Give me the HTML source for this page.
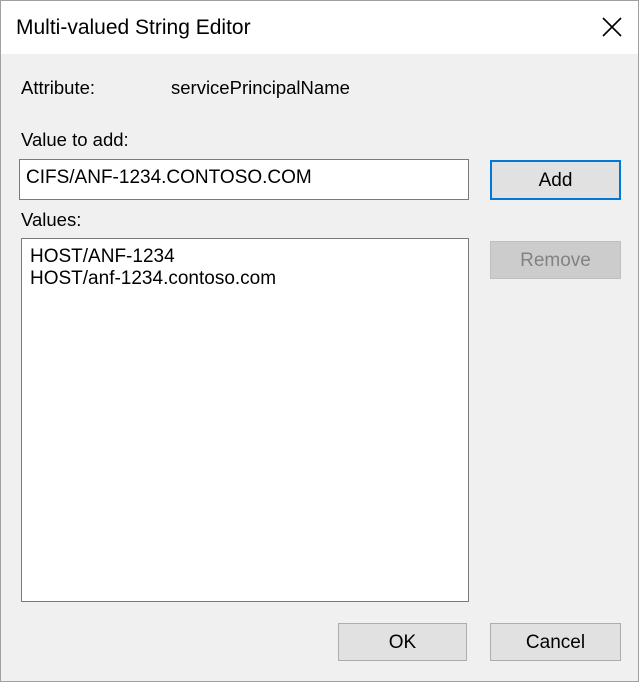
<!DOCTYPE html>
<html><head><style>
body{margin:0;width:639px;height:682px;overflow:hidden;font-family:"Liberation Sans",sans-serif;font-size:18.5px;color:#000}
.win{position:absolute;left:0;top:0;width:637px;height:680px;border:1px solid #a0a0a0;background:#f0f0f0}
.title{position:absolute;left:0;top:0;width:637px;height:53px;background:#fff}
.t{position:absolute;white-space:nowrap}
.box{position:absolute;background:#fff;border:1px solid #7a7a7a;box-sizing:border-box}
.btn{position:absolute;background:#e1e1e1;border:1px solid #adadad;box-sizing:border-box;text-align:center;line-height:35px}
</style></head><body>
<div class="win">
<div class="title"></div>
<div class="t" style="left:15px;top:15px;font-size:21px">Multi-valued String Editor</div>
<svg style="position:absolute;left:601px;top:16px" width="20" height="20"><path d="M1 1L19 19M19 1L1 19" stroke="#000" stroke-width="1.6"/></svg>
<div class="t" style="left:20px;top:76px">Attribute:</div>
<div class="t" style="left:170px;top:76px">servicePrincipalName</div>
<div class="t" style="left:20px;top:128px">Value to add:</div>
<div class="box" style="left:18px;top:158px;width:450px;height:41px"></div>
<div class="t" style="left:25px;top:166px;font-size:19px">CIFS/ANF-1234.CONTOSO.COM</div>
<div class="btn" style="left:489px;top:159px;width:131px;height:40px;border:2px solid #0078d7;line-height:38px;font-size:19px">Add</div>
<div class="t" style="left:20px;top:208px">Values:</div>
<div class="box" style="left:20px;top:237px;width:448px;height:364px"></div>
<div class="t" style="left:29px;top:245px;line-height:22px;font-size:19px">HOST/ANF-1234<br>HOST/anf-1234.contoso.com</div>
<div class="btn" style="left:489px;top:240px;width:131px;height:38px;background:#cccccc;border-color:#bfbfbf;color:#838383;font-size:19px;line-height:37px">Remove</div>
<div class="btn" style="left:337px;top:622px;width:129px;height:38px;font-size:19px;line-height:37px">OK</div>
<div class="btn" style="left:489px;top:622px;width:131px;height:38px;font-size:19px;line-height:37px">Cancel</div>
</div>
</body></html>
